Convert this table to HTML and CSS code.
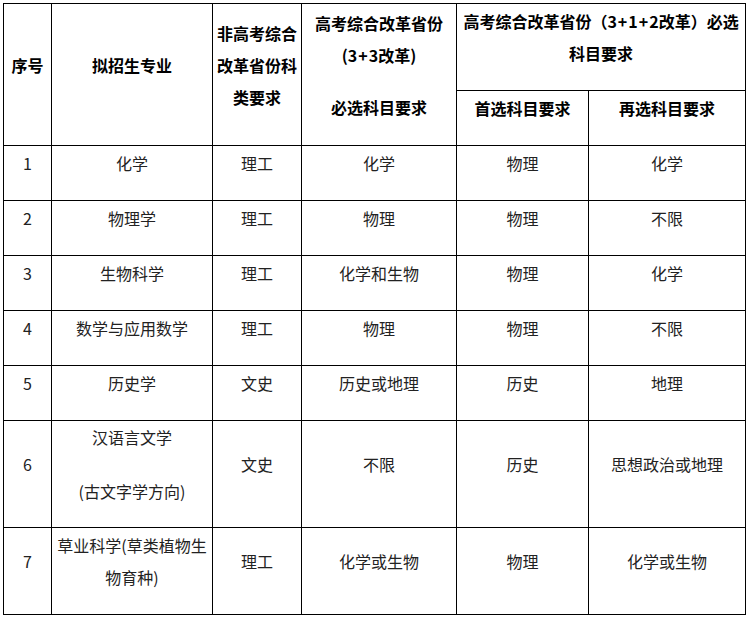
FILE: index.html
```
<!DOCTYPE html>
<html lang="zh-CN">
<head>
<meta charset="utf-8">
<link rel="stylesheet" href="styles.css">
</head>
<body>
<div class="wrap">
<table class="grid">
  <colgroup>
    <col class="c1"><col class="c2"><col class="c3"><col class="c4"><col class="c5"><col class="c6">
  </colgroup>
  <thead>
    <tr class="h1">
      <th rowspan="2">序号</th>
      <th rowspan="2">拟招生专业</th>
      <th rowspan="2">非高考综合<br>改革省份科<br>类要求</th>
      <th rowspan="2"><p>高考综合改革省份<br>(3<span class="plus">+</span>3改革)</p><p class="gap">必选科目要求</p></th>
      <th colspan="2">高考综合改革省份（3<span class="plus">+</span>1<span class="plus">+</span>2改革）必选<br>科目要求</th>
    </tr>
    <tr class="h2">
      <th>首选科目要求</th>
      <th>再选科目要求</th>
    </tr>
  </thead>
  <tbody>
    <tr class="r"><td>1</td><td>化学</td><td>理工</td><td>化学</td><td>物理</td><td>化学</td></tr>
    <tr class="r"><td>2</td><td>物理学</td><td>理工</td><td>物理</td><td>物理</td><td>不限</td></tr>
    <tr class="r"><td>3</td><td>生物科学</td><td>理工</td><td>化学和生物</td><td>物理</td><td>化学</td></tr>
    <tr class="r"><td>4</td><td>数学与应用数学</td><td>理工</td><td>物理</td><td>物理</td><td>不限</td></tr>
    <tr class="r"><td>5</td><td>历史学</td><td>文史</td><td>历史或地理</td><td>历史</td><td>地理</td></tr>
    <tr class="r6"><td>6</td><td><p>汉语言文学</p><p class="gap2">(古文字学方向)</p></td><td>文史</td><td>不限</td><td>历史</td><td>思想政治或地理</td></tr>
    <tr class="r7"><td>7</td><td>草业科学(草类植物生<br>物育种)</td><td>理工</td><td>化学或生物</td><td>物理</td><td>化学或生物</td></tr>
  </tbody>
</table>
</div>
</body>
</html>
```
FILE: styles.css
```
html, body {
  margin: 0;
  padding: 0;
  background: #fff;
}
.wrap {
  padding: 3px 0 0 3px;
}
.grid {
  border-collapse: collapse;
  table-layout: fixed;
  width: 742px;
  font-family: "Microsoft YaHei", "Noto Sans CJK SC", sans-serif;
  font-size: 16px;
  line-height: 32px;
  color: #222;
}
.c1 { width: 48px; }
.c2 { width: 161px; }
.c3 { width: 89px; }
.c4 { width: 155px; }
.c5 { width: 132px; }
.c6 { width: 157px; }
.grid th,
.grid td {
  border: 1px solid #000;
  padding: 0 1px 20px;
  text-align: center;
  vertical-align: middle;
}
.grid th {
  font-weight: 700;
  color: #000;
}
.grid p {
  margin: 0;
}
.grid p.gap {
  margin-top: 20px;
}
.grid p.gap2 {
  margin-top: 22px;
}
.plus {
  margin: 0 1px;
}
.h1 { height: 87px; }
.h2 { height: 55px; }
.r { height: 55px; }
.r6 { height: 107px; }
.r7 { height: 87px; }
```
